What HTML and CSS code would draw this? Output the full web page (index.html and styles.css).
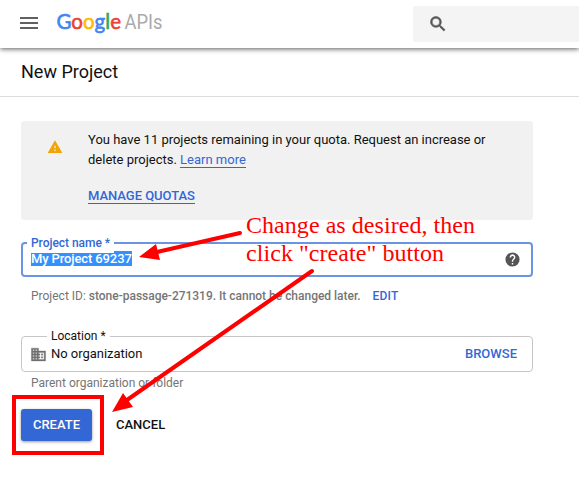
FILE: index.html
```html
<!DOCTYPE html>
<html lang="en">
<head>
<meta charset="utf-8">
<title>New Project</title>
<link rel="stylesheet" href="styles.css">
</head>
<body>
<header class="topbar">
  <svg class="menu" width="18" height="12" viewBox="0 0 18 12"><path d="M0 0h18v2H0zM0 5h18v2H0zM0 10h18v2H0z" fill="#616161"/></svg>
  <svg class="logo" width="110" height="36" viewBox="0 0 110 36">
    <text class="google" x="-.5" y="23" textLength="64.5" lengthAdjust="spacingAndGlyphs"><tspan class="blue">G</tspan><tspan class="red">o</tspan><tspan class="yellow">o</tspan><tspan class="blue">g</tspan><tspan class="green">l</tspan><tspan class="red">e</tspan></text>
    <text class="apis" x="67.5" y="23" textLength="38" lengthAdjust="spacingAndGlyphs">APIs</text>
  </svg>
  <div class="search"><svg width="20" height="20" viewBox="0 0 24 24"><path d="M15.5 14h-.79l-.28-.27A6.47 6.47 0 0 0 16 9.5 6.5 6.5 0 1 0 9.5 16c1.61 0 3.09-.59 4.23-1.57l.27.28v.79l5 4.99L20.49 19zm-6 0a4.5 4.5 0 1 1 0-9 4.5 4.5 0 0 1 0 9z" fill="#555" stroke="#555" stroke-width=".7"/></svg></div>
</header>
<h1 class="title"><span>New Project</span></h1>
<main class="content">
  <section class="notice">
    <svg class="warn" width="16" height="16" viewBox="0 0 24 24"><path d="M1 21h22L12 2zm12-3h-2v-2h2zm0-4h-2v-4h2z" fill="#f4a300"/></svg>
    <div class="notice-text">
      <p><span class="line1">You have 11 projects remaining in your quota. Request an increase or</span><br><span class="line2">delete projects.</span> <a class="learn">Learn more</a></p>
      <a class="manage">MANAGE QUOTAS</a>
    </div>
  </section>
  <div class="field name-field">
    <label class="label name-label">Project name *</label>
    <span class="selected">My Project 69237</span>
    <svg class="help" width="17" height="17" viewBox="0 0 24 24"><path d="M12 2a10 10 0 1 0 0 20 10 10 0 0 0 0-20zm1 17h-2v-2h2zm2.07-7.75-.9.92C13.45 12.9 13 13.5 13 15h-2v-.5c0-1.1.45-2.1 1.17-2.83l1.24-1.26A2 2 0 1 0 10 9H8a4 4 0 1 1 7.07 2.25z" fill="#555"/></svg>
  </div>
  <div class="hint id-hint"><span class="hint-id">Project ID: <b>stone-passage-271319. It cannot be changed later.</b></span><a class="edit">EDIT</a></div>
  <div class="field location-field">
    <label class="label location-label">Location *</label>
    <svg class="building" width="17" height="17" viewBox="0 0 24 24"><path d="M12 7V3H2v18h20V7zM6 19H4v-2h2zm0-4H4v-2h2zm0-4H4V9h2zm0-4H4V5h2zm4 12H8v-2h2zm0-4H8v-2h2zm0-4H8V9h2zm0-4H8V5h2zm10 12h-8v-2h2v-2h-2v-2h2v-2h-2V9h8zm-2-8h-2v2h2zm0 4h-2v2h2z" fill="#707070" stroke="#707070" stroke-width=".5"/></svg>
    <span class="org">No organization</span>
    <a class="browse">BROWSE</a>
  </div>
  <div class="hint parent-hint"><span class="parent">Parent organization or folder</span></div>
  <div class="actions"><button class="create"><span>CREATE</span></button><button class="cancel">CANCEL</button></div>
</main>
<svg class="annotation" width="579" height="491" viewBox="0 0 579 491">
  <rect x="14" y="397" width="88" height="56" fill="none" stroke="#f00" stroke-width="4"/>
  <g stroke="#f00" stroke-width="4" stroke-linecap="round"><path d="M240 233 157 252"/><path d="M312 271 127 400"/></g>
  <path d="M139 257 156 244 160 260zM112 412l11-19 10 14z" fill="#f00"/>
  <g class="note"><text x="246" y="233" textLength="229">Change as desired, then</text><text x="246" y="261" textLength="198">click "create" button</text></g>
</svg>
</body>
</html>
```
FILE: styles.css
```css
* { box-sizing: border-box; }
body { margin: 0; height: 491px; overflow: hidden; background: #fff; color: #111; font: 13px/20px Roboto, sans-serif; }
svg { display: block; flex: none; }
.topbar { position: relative; display: flex; align-items: flex-start; height: 48px; padding-left: 20px; box-shadow: 0 1px 5px rgba(0,0,0,.65); }
.menu { margin-top: 17px; }
.logo { margin: 6px 0 0 19px; }
.google { font: 20.5px Lato, sans-serif; stroke-width: .6px; }
.blue { fill: #4285f4; stroke: #4285f4; }
.red { fill: #ea4335; stroke: #ea4335; }
.yellow { fill: #fbbc05; stroke: #fbbc05; }
.green { fill: #34a853; stroke: #34a853; }
.apis { font: 19.5px Roboto, sans-serif; fill: #aaa; }
.search { flex: 1; height: 36px; margin: 6px 0 0 246px; padding: 8px 0 0 15px; background: #f4f4f4; border-radius: 2px 0 0 2px; }
.title { height: 49px; margin: 0; padding: 12px 0 0 21px; border-bottom: 1px solid #ddd; font-size: 18px; line-height: 24px; font-weight: 400; }
.content { padding: 24px 46px 0 21px; }
.notice { display: flex; height: 99px; padding: 9px 0 0 26px; background: #f1f1f1; border-radius: 3px; }
.warn { margin-top: 9px; }
.notice-text { margin-left: 25px; white-space: nowrap; }
.notice p { margin: 0 0 17px; }
.line1 { letter-spacing: -.01px; }
a { color: #3367d6; font-weight: 500; }
.learn { font-weight: 400; }
.learn, .manage { display: inline-block; height: 17px; line-height: 17px; border-bottom: 1px solid #3367d6; }
.manage { display: block; width: max-content; letter-spacing: -.03px; }
.field { position: relative; display: flex; align-items: center; border: 1px solid #c6c6c6; border-radius: 4px; }
.name-field { height: 35px; margin-top: 22px; padding: 0 10px 0 8px; border: 2px solid #6c94e4; justify-content: space-between; }
.label { position: absolute; top: -11px; padding: 0 4px; background: #fff; font-size: 12px; line-height: 20px; font-weight: 500; }
.name-label { left: 4px; color: #3367d6; letter-spacing: -.04px; }
.selected { height: 15px; margin-bottom: 2px; line-height: 15px; color: #fff; background: #3390ff; font-weight: 500; letter-spacing: -.12px; }
.hint { display: flex; color: #757575; font-size: 12px; white-space: nowrap; }
.hint b { font-weight: 500; color: #757575; letter-spacing: -.02px; }
.id-hint { height: 59px; padding: 9px 0 0 10px; }
.edit { margin-left: 12px; letter-spacing: .15px; }
.location-field { height: 36px; padding: 0 15px 0 8px; }
.location-label { left: 25px; font-weight: 400; }
.org { margin-left: 4px; letter-spacing: -.03px; }
.browse { margin-left: auto; }
.parent-hint { padding: 1px 0 0 10px; }
.actions { display: flex; margin-top: 16px; }
button { padding: 0; border: 0; background: none; font: 500 13px/32px Roboto, sans-serif; color: #111; }
.create { width: 71px; height: 32px; border-radius: 3px; background: #3367d6; color: #fff; box-shadow: 0 1px 3px rgba(0,0,0,.4); }
.cancel { margin-left: 24px; }
.annotation { position: absolute; left: 0; top: 0; pointer-events: none; }
.note { font: 24px "Liberation Serif", serif; fill: #f00; }
```
